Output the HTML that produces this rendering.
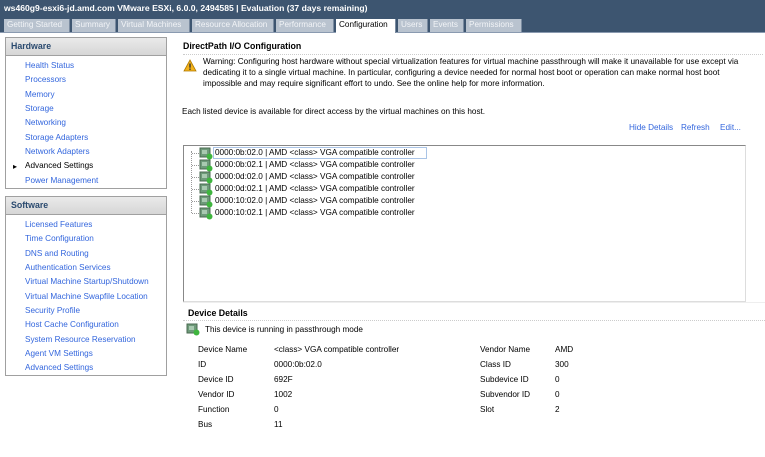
<!DOCTYPE html>
<html><head><style>
*{margin:0;padding:0;box-sizing:border-box}
body{width:765px;height:457px;background:#fff;font-family:"Liberation Sans",sans-serif;font-size:8.2px;color:#000;position:relative;overflow:hidden}
.a{position:absolute;white-space:nowrap}
.title{left:0;top:0;width:765px;height:17px;background:#3d5570;color:#fff;font-weight:bold;font-size:8.6px;padding:3px 0 0 4px}
.tabs{left:0;top:17px;width:765px;height:16px;background:#3d5570;border-bottom:1px solid #8a9ab0}
.tab{position:absolute;top:2px;height:13px;background:#b9c3cf;font-size:8.2px;padding:1px 3px;border-right:1px solid #7a8ba0;color:#f2f4f7;white-space:nowrap;overflow:hidden}
.tab.on{background:#fff;color:#000;height:14px}
.box{position:absolute;left:5px;width:162px;border:1px solid #a0a0a0}
.hd{height:18px;background:linear-gradient(#eaeaea,#d6d6d6);border-bottom:1px solid #a0a0a0;color:#2a4a6f;font-weight:bold;font-size:8.8px;padding:3px 0 0 5px}
.lk{color:#3366dd}
.bl{color:#000}
.l{position:absolute;left:19px;white-space:nowrap}
</style></head><body>
<div class="a title">ws460g9-esxi6-jd.amd.com VMware ESXi, 6.0.0, 2494585 | Evaluation (37 days remaining)</div>
<div class="a tabs">
<div class="tab" style="left:4px;width:66px">Getting Started</div>
<div class="tab" style="left:72px;width:44px">Summary</div>
<div class="tab" style="left:118px;width:72px">Virtual Machines</div>
<div class="tab" style="left:192px;width:82px">Resource Allocation</div>
<div class="tab" style="left:276px;width:58px">Performance</div>
<div class="tab on" style="left:336px;width:60px">Configuration</div>
<div class="tab" style="left:398px;width:30px">Users</div>
<div class="tab" style="left:430px;width:34px">Events</div>
<div class="tab" style="left:466px;width:56px">Permissions</div>
</div>

<div class="box" style="top:37px;height:152px"><div class="hd">Hardware</div>
<div class="l lk" style="top:23px">Health Status</div>
<div class="l lk" style="top:37px">Processors</div>
<div class="l lk" style="top:52px">Memory</div>
<div class="l lk" style="top:66px">Storage</div>
<div class="l lk" style="top:80px">Networking</div>
<div class="l lk" style="top:95px">Storage Adapters</div>
<div class="l lk" style="top:109px">Network Adapters</div>
<div class="l bl" style="top:123px;left:7px">▸</div>
<div class="l bl" style="top:123px">Advanced Settings</div>
<div class="l lk" style="top:138px">Power Management</div>
</div>
<div class="box" style="top:196px;height:180px"><div class="hd">Software</div>
<div class="l lk" style="top:23px">Licensed Features</div>
<div class="l lk" style="top:37px">Time Configuration</div>
<div class="l lk" style="top:52px">DNS and Routing</div>
<div class="l lk" style="top:66px">Authentication Services</div>
<div class="l lk" style="top:80px">Virtual Machine Startup/Shutdown</div>
<div class="l lk" style="top:95px">Virtual Machine Swapfile Location</div>
<div class="l lk" style="top:109px">Security Profile</div>
<div class="l lk" style="top:123px">Host Cache Configuration</div>
<div class="l lk" style="top:138px">System Resource Reservation</div>
<div class="l lk" style="top:152px">Agent VM Settings</div>
<div class="l lk" style="top:166px">Advanced Settings</div>
</div>

<div class="a" style="left:183px;top:41px;font-weight:bold;font-size:8.8px">DirectPath I/O Configuration</div>
<div class="a" style="left:183px;top:54px;width:580px;border-top:1px dotted #ccc"></div>
<svg class="a" style="left:183px;top:59px" width="14" height="13"><polygon points="7,1 13,12 1,12" fill="#f3b21b" stroke="#b07a00" stroke-width="0.8"/><rect x="6.3" y="4.5" width="1.4" height="4.2" fill="#333"/><rect x="6.3" y="9.5" width="1.4" height="1.4" fill="#333"/></svg>
<div class="a" style="left:203px;top:56px;line-height:11px">Warning: Configuring host hardware without special virtualization features for virtual machine passthrough will make it unavailable for use except via<br>dedicating it to a single virtual machine. In particular, configuring a device needed for normal host boot or operation can make normal host boot<br>impossible and may require significant effort to undo. See the online help for more information.</div>
<div class="a" style="left:182px;top:107px">Each listed device is available for direct access by the virtual machines on this host.</div>
<div class="a lk" style="left:629px;top:123px">Hide Details</div>
<div class="a lk" style="left:681px;top:123px">Refresh</div>
<div class="a lk" style="left:720px;top:123px">Edit...</div>
<div class="a" style="left:183px;top:145px;width:563px;height:157px;border:1px solid #ddd;border-top:1px solid #888;border-left:1px solid #888"></div>
<div class="a" style="left:191px;top:151px;width:1px;height:62px;border-left:1px dotted #999"></div>
<div class="a" style="left:213px;top:147px;width:214px;height:12px;border:1px solid #aac4e6"></div>

<div id="rows"></div>
<script>
var ids=["0000:0b:02.0","0000:0b:02.1","0000:0d:02.0","0000:0d:02.1","0000:10:02.0","0000:10:02.1"],h="";
ids.forEach(function(d,i){var y=148+i*12;
h+='<div class="a" style="left:192px;top:'+(y+5)+'px;width:7px;border-top:1px dotted #999"></div>';
h+='<svg class="a" style="left:199px;top:'+(y-1)+'px" width="14" height="13"><rect x="1" y="1" width="10" height="9" fill="#6e9a7a" stroke="#4a6a50"/><rect x="3" y="3" width="5" height="4" fill="#a8c9b0"/><circle cx="10.5" cy="9.5" r="3" fill="#3fb53f"/></svg>';
h+='<div class="a" style="left:215px;top:'+y+'px">'+d+' | AMD &lt;class&gt; VGA compatible controller</div>';});
document.getElementById('rows').innerHTML=h;
</script>

<div class="a" style="left:183px;top:302px;width:582px;border-top:1px solid #eee"></div>
<div class="a" style="left:188px;top:308px;font-weight:bold;font-size:8.8px">Device Details</div>
<div class="a" style="left:183px;top:320px;width:582px;border-top:1px dotted #ccc"></div>
<svg class="a" style="left:186px;top:323px" width="14" height="13"><rect x="1" y="1" width="10" height="9" fill="#6e9a7a" stroke="#4a6a50"/><rect x="3" y="3" width="5" height="4" fill="#a8c9b0"/><circle cx="10.5" cy="9.5" r="3" fill="#3fb53f"/></svg>
<div class="a" style="left:205px;top:325px">This device is running in passthrough mode</div>
<div class="a" style="left:198px;top:342px;line-height:15px">Device Name<br>ID<br>Device ID<br>Vendor ID<br>Function<br>Bus</div>
<div class="a" style="left:274px;top:342px;line-height:15px">&lt;class&gt; VGA compatible controller<br>0000:0b:02.0<br>692F<br>1002<br>0<br>11</div>
<div class="a" style="left:480px;top:342px;line-height:15px">Vendor Name<br>Class ID<br>Subdevice ID<br>Subvendor ID<br>Slot</div>
<div class="a" style="left:555px;top:342px;line-height:15px">AMD<br>300<br>0<br>0<br>2</div>
</body></html>
